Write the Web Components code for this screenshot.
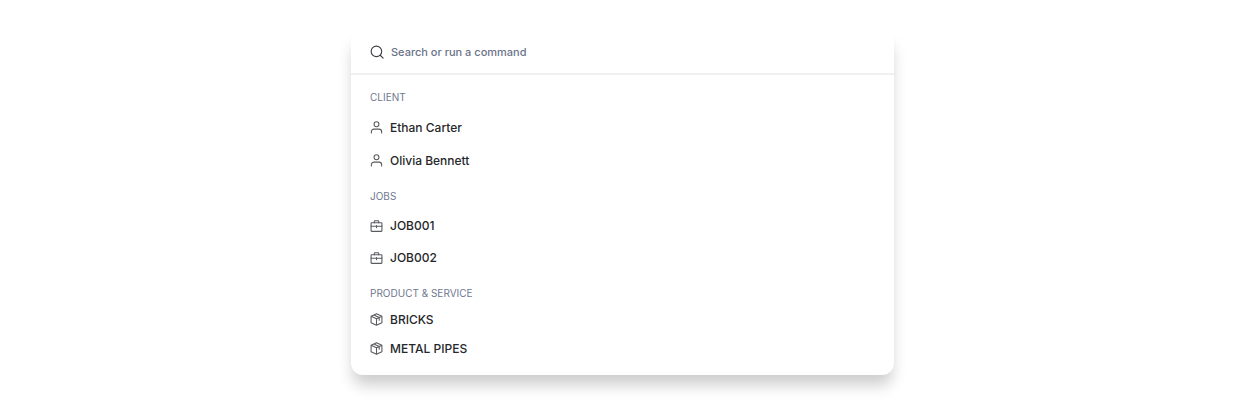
<!DOCTYPE html>
<html lang="en">
<head>
<meta charset="utf-8">
<meta name="viewport" content="width=device-width, initial-scale=1">
<title>Command menu</title>
<style>
body { margin: 0; background: #fff; font-family: Inter, "Liberation Sans", sans-serif; color: #26272b; }
</style>
</head>
<body>
<command-menu>
  <command-search slot="search"></command-search>
  <command-group heading="CLIENT">
    <command-item icon="user">Ethan Carter</command-item>
    <command-item icon="user">Olivia Bennett</command-item>
  </command-group>
  <command-group heading="JOBS" density="medium">
    <command-item icon="case">JOB001</command-item>
    <command-item icon="case">JOB002</command-item>
  </command-group>
  <command-group heading="PRODUCT &amp; SERVICE" density="compact">
    <command-item icon="box">BRICKS</command-item>
    <command-item icon="box">METAL PIPES</command-item>
  </command-group>
</command-menu>
<script>
const icons = {
  user: '<circle cx="12" cy="6" r="4.500"/><path d="M2.500 22v-2a5 5 0 0 1 5-5h9a5 5 0 0 1 5 5v2"/>',
  case: '<rect x="2" y="5" width="20" height="16" rx="1"/><path d="M8 5V2.500a1 1 0 0 1 1-1h6a1 1 0 0 1 1 1V5M2 11.500h20M12 10v4"/>',
  box: '<path d="M12 1.500 22 6v12l-10 4.500L2 18V6zM2 6l10 4.500L22 6M12 10.500v12M7 3.800l10 4.500v5"/>'
};

class CommandMenu extends HTMLElement {
  constructor() {
    super();
    this.attachShadow({ mode: 'open' }).innerHTML = `
      <style>
        :host { display: block; padding: 30px 16px 26px; }
        .panel { max-width: 543px; margin: 0 auto; background: #fff; border-radius: 12px; box-shadow: 0 12px 15px -2px rgba(0, 0, 0, .2); }
        .list { display: flex; flex-direction: column; gap: 11px; padding: 14px 8px 12px; }
      </style>
      <div class="panel">
        <slot name="search"></slot>
        <div class="list"><slot></slot></div>
      </div>`;
  }
}

class CommandSearch extends HTMLElement {
  constructor() {
    super();
    this.attachShadow({ mode: 'open' }).innerHTML = `
      <style>
        :host { display: block; border-bottom: 2px solid #f0f0f0; }
        label { display: flex; align-items: center; gap: 7px; height: 43px; padding: 0 19px; }
        svg { flex: none; width: 14px; height: 14px; fill: none; stroke: #3f4045; stroke-width: 2; stroke-linecap: round; }
        input { flex: 1; min-width: 0; height: 20px; padding: 0; border: 0; outline: 0; background: none; font: 500 11px/20px Inter, "Liberation Sans", sans-serif; color: #26272b; }
        input::placeholder { color: #6b7388; opacity: 1; }
      </style>
      <label>
        <svg viewBox="0 0 24 24" aria-hidden="true"><circle cx="11" cy="11" r="9"/><path d="m18 18 4.500 4.500"/></svg>
        <input type="text" placeholder="Search or run a command" aria-label="Search or run a command">
      </label>`;
  }
}

class CommandGroup extends HTMLElement {
  constructor() {
    super();
    this.attachShadow({ mode: 'open' }).innerHTML = `
      <style>
        :host { display: block; --row: 33px; --head-gap: 6px; }
        :host([density="medium"]) { --row: 32px; }
        :host([density="compact"]) { --row: 29px; --head-gap: 4px; }
        h2 { margin: 0 11px var(--head-gap); font-size: 10px; line-height: 16px; font-weight: 400; color: #6f788f; }
      </style>
      <h2></h2>
      <slot></slot>`;
  }
  connectedCallback() {
    this.shadowRoot.querySelector('h2').textContent = this.getAttribute('heading');
  }
}

class CommandItem extends HTMLElement {
  constructor() {
    super();
    this.attachShadow({ mode: 'open' }).innerHTML = `
      <style>
        :host { display: block; }
        button { display: flex; align-items: center; gap: 7px; width: 100%; height: var(--row); padding: 0 11px; border: 0; border-radius: 6px; background: none; color: inherit; font: inherit; font-size: 12px; line-height: 20px; font-weight: 500; text-align: left; cursor: pointer; }
        svg { flex: none; width: 13px; height: 13px; fill: none; stroke: #5a5b5f; stroke-width: 2; stroke-linejoin: round; stroke-linecap: round; }
      </style>
      <button type="button"><svg viewBox="0 0 24 24" aria-hidden="true"></svg><slot></slot></button>`;
  }
  connectedCallback() {
    this.shadowRoot.querySelector('svg').innerHTML = icons[this.getAttribute('icon')];
  }
}

customElements.define('command-menu', CommandMenu);
customElements.define('command-search', CommandSearch);
customElements.define('command-group', CommandGroup);
customElements.define('command-item', CommandItem);
</script>
</body>
</html>
